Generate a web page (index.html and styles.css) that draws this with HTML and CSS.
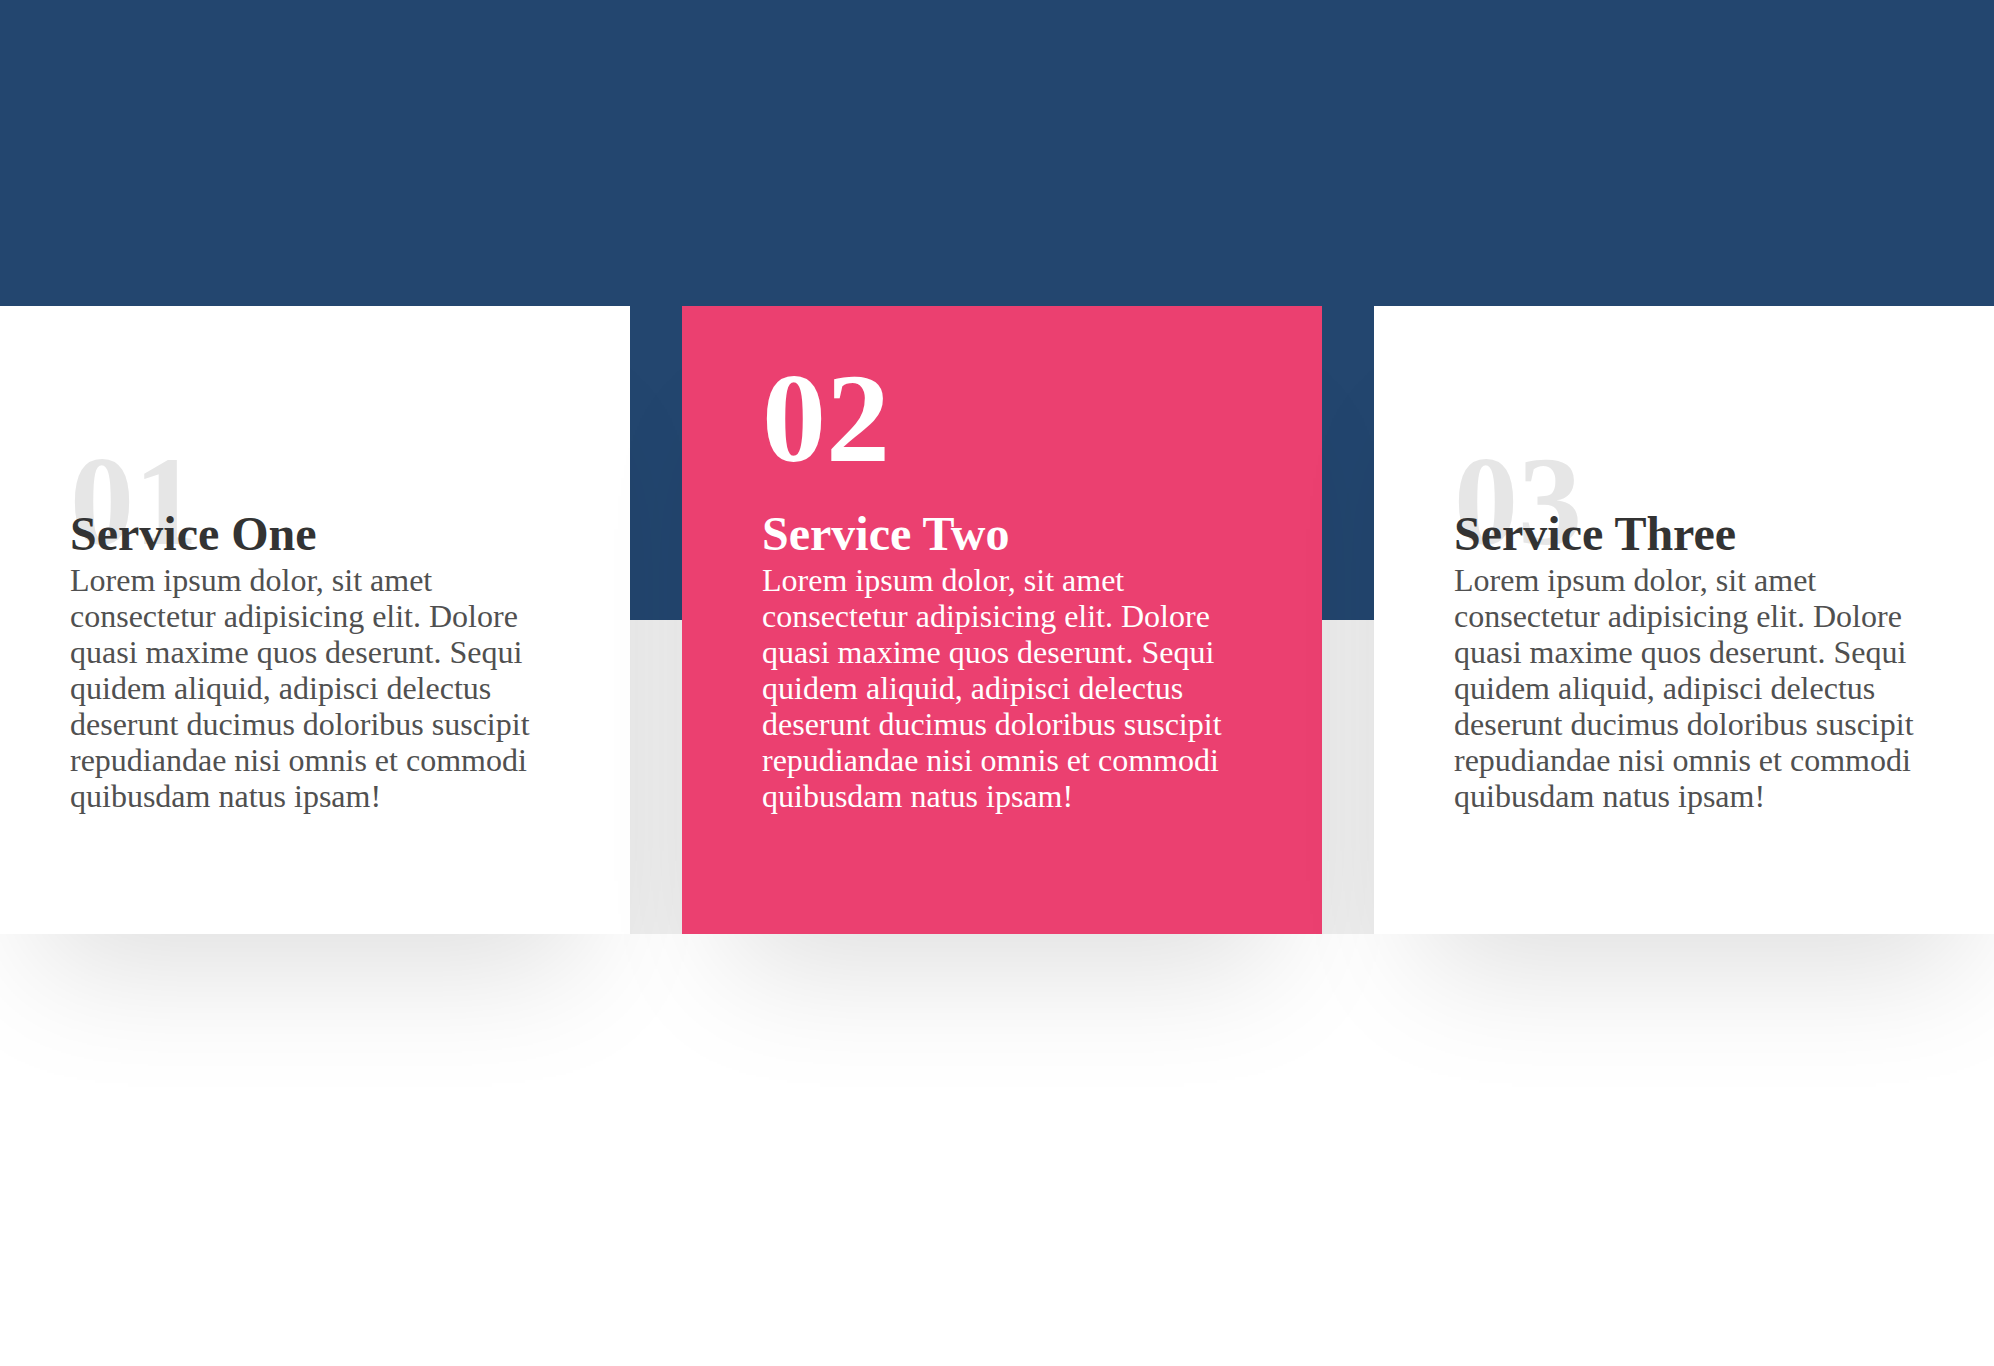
FILE: index.html
```html
<!DOCTYPE html>
<html lang="en">
<head>
<meta charset="utf-8">
<title>Services</title>
<link rel="stylesheet" href="styles.css">
</head>
<body>
  <div class="page">
    <header class="hero"></header>
    <section class="services">
      <div class="row">
        <article class="card">
          <div class="num">01</div>
          <h2 class="title">Service One</h2>
          <p class="text">Lorem ipsum dolor, sit amet consectetur adipisicing elit. Dolore quasi maxime quos deserunt. Sequi quidem aliquid, adipisci delectus deserunt ducimus doloribus suscipit repudiandae nisi omnis et commodi quibusdam natus ipsam!</p>
        </article>
        <article class="card card--active">
          <div class="num">02</div>
          <h2 class="title">Service Two</h2>
          <p class="text">Lorem ipsum dolor, sit amet consectetur adipisicing elit. Dolore quasi maxime quos deserunt. Sequi quidem aliquid, adipisci delectus deserunt ducimus doloribus suscipit repudiandae nisi omnis et commodi quibusdam natus ipsam!</p>
        </article>
        <article class="card">
          <div class="num">03</div>
          <h2 class="title">Service Three</h2>
          <p class="text">Lorem ipsum dolor, sit amet consectetur adipisicing elit. Dolore quasi maxime quos deserunt. Sequi quidem aliquid, adipisci delectus deserunt ducimus doloribus suscipit repudiandae nisi omnis et commodi quibusdam natus ipsam!</p>
        </article>
      </div>
    </section>
  </div>
</body>
</html>
```

FILE: styles.css
```css
html, body {
  margin: 0;
  padding: 0;
  background: #ffffff;
}

body {
  font-family: "Liberation Serif", "Times New Roman", serif;
}

.page {
  min-height: 100vh;
  overflow-x: clip;
}

.hero {
  height: 306px;
  background: #23466f;
}

.services {
  height: 628px;
  background: linear-gradient(#23466f 50%, #eeeeee 50%);
}

.row {
  display: flex;
  gap: 52px;
  height: 100%;
  margin-left: -10px;
}

.card {
  flex: 0 0 640px;
  box-sizing: border-box;
  padding: 48px 80px 0;
  background: #ffffff;
  box-shadow: 0 85px 120px -50px rgba(0, 0, 0, 0.13);
}

.card--active {
  background: #eb4070;
}

.num {
  font-size: 128px;
  line-height: 1;
  font-weight: bold;
  color: #e6e6e6;
  transform: translateY(83px);
}

.card--active .num {
  color: #ffffff;
  transform: none;
}

.title {
  position: relative;
  margin: 24px 0 0;
  font-size: 48px;
  line-height: 56px;
  font-weight: bold;
  color: #333333;
}

.text {
  margin: 0;
  font-size: 32px;
  line-height: 36px;
  color: #505050;
}

.card--active .title,
.card--active .text {
  color: #ffffff;
}
```
